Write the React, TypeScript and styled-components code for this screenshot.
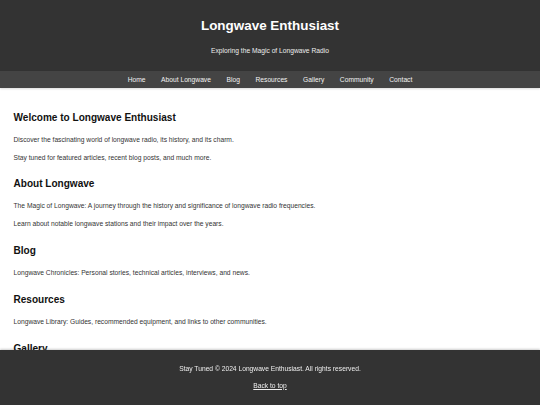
import styled, { createGlobalStyle } from "styled-components";

const GlobalStyle = createGlobalStyle`
    html, body {
        margin: 0;
        padding: 0;
        background: #ffffff;
        font-family: "Liberation Sans", Arial, sans-serif;
        color: #111;
    }
`

const links = ["Home", "About Longwave", "Blog", "Resources", "Gallery", "Community", "Contact"];

const sections = [
    {
        title: "Welcome to Longwave Enthusiast",
        lines: [
            "Discover the fascinating world of longwave radio, its history, and its charm.",
            "Stay tuned for featured articles, recent blog posts, and much more.",
        ],
    },
    {
        title: "About Longwave",
        lines: [
            "The Magic of Longwave: A journey through the history and significance of longwave radio frequencies.",
            "Learn about notable longwave stations and their impact over the years.",
        ],
    },
    {
        title: "Blog",
        lines: ["Longwave Chronicles: Personal stories, technical articles, interviews, and news."],
    },
    {
        title: "Resources",
        lines: ["Longwave Library: Guides, recommended equipment, and links to other communities."],
    },
    {
        title: "Gallery",
        lines: ["Photos of antennas, receivers and longwave stations."],
    },
];

const App = () => {
    return (
        <>
            <GlobalStyle />
            <Header>
                <SiteTitle>Longwave Enthusiast</SiteTitle>
                <Tagline>Exploring the Magic of Longwave Radio</Tagline>
            </Header>
            <Nav>
                {links.map((l) => (
                    <NavLink key={l} href="#">{l}</NavLink>
                ))}
            </Nav>
            <Main>
                {sections.map((s) => (
                    <section key={s.title}>
                        <SectionTitle>{s.title}</SectionTitle>
                        {s.lines.map((line) => (
                            <Text key={line}>{line}</Text>
                        ))}
                    </section>
                ))}
            </Main>
            <Footer>
                <FooterText>Stay Tuned © 2024 Longwave Enthusiast. All rights reserved.</FooterText>
                <TopLink href="#">Back to top</TopLink>
            </Footer>
        </>
    )
}

export default App;

const Header = styled.header`
    background-color: #333333;
    color: #ffffff;
    display: flex;
    flex-direction: column;
    align-items: center;
    padding: 18.3px 0 15.4px;
`

const SiteTitle = styled.h1`
    margin: 0;
    font-size: 13.45px;
    line-height: 16px;
    font-weight: 700;
`

const Tagline = styled.p`
    margin: 13px 0 0;
    font-size: 6.7px;
    line-height: 8px;
    color: #eeeeee;
`

const Nav = styled.nav`
    background-color: #444444;
    height: 17px;
    display: flex;
    justify-content: center;
    align-items: center;
    gap: 15.6px;
    box-shadow: 0 1px 2px rgba(0, 0, 0, 0.15);
`

const NavLink = styled.a`
    color: #f2f2f2;
    text-decoration: none;
    font-size: 6.7px;
    line-height: 17px;
`

const Main = styled.main`
    padding: 8.5px 13.5px 70px;
`

const SectionTitle = styled.h2`
    margin: 15.5px 0 10.5px;
    font-size: 10.05px;
    line-height: 11.5px;
    font-weight: 700;
    color: #111111;
`

const Text = styled.p`
    margin: 6.7px 0;
    font-size: 6.7px;
    line-height: 11.3px;
    color: #333333;
`

const Footer = styled.footer`
    position: fixed;
    left: 0;
    right: 0;
    bottom: 0;
    height: 55.5px;
    box-sizing: border-box;
    background-color: #333333;
    color: #ffffff;
    display: flex;
    flex-direction: column;
    align-items: center;
    padding-top: 15.2px;
    gap: 9px;
    box-shadow: 0 -1px 2px rgba(0, 0, 0, 0.2);
`

const FooterText = styled.p`
    margin: 0;
    font-size: 6.7px;
    line-height: 8px;
    color: #eeeeee;
`

const TopLink = styled.a`
    color: #eeeeee;
    text-decoration: underline;
    font-size: 6.7px;
    line-height: 8px;
`
